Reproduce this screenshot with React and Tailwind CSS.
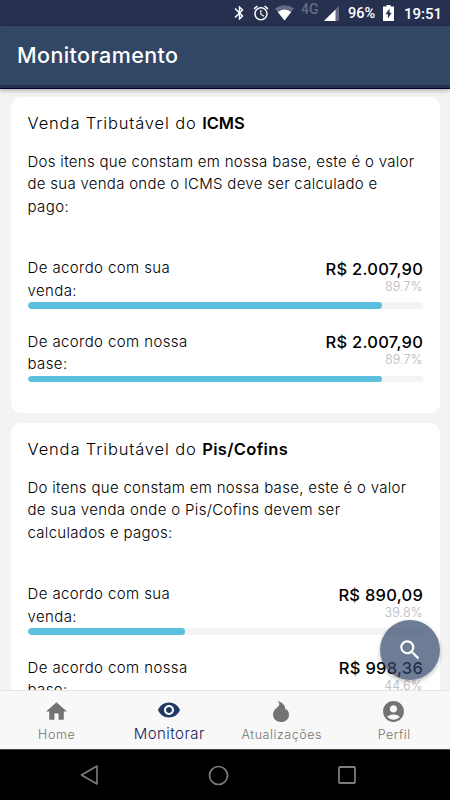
import React from 'react';
import { MdAccountCircle, MdAlarm, MdBluetooth, MdHome, MdRemoveRedEye, MdSearch } from 'react-icons/md';

const cards = [
  {
    tax: 'ICMS',
    taxClass: 'tracking-[0px]',
    lines: [
      { text: 'Dos itens que constam em nossa base, este é o valor', className: 'tracking-[0.3px]' },
      { text: 'de sua venda onde o ICMS deve ser calculado e', className: 'tracking-[0.28px]' },
      { text: 'pago:', className: 'tracking-[0.4px]' },
    ],
    rows: [
      { label: ['De acordo com sua', 'venda:'], value: 'R$ 2.007,90', percent: 89.7 },
      { label: ['De acordo com nossa', 'base:'], value: 'R$ 2.007,90', percent: 89.7 },
    ],
  },
  {
    tax: 'Pis/Cofins',
    taxClass: 'tracking-[0.35px]',
    lines: [
      { text: 'Do itens que constam em nossa base, este é o valor', className: 'tracking-[0.3px]' },
      { text: 'de sua venda onde o Pis/Cofins devem ser', className: 'tracking-[0.34px]' },
      { text: 'calculados e pagos:', className: 'tracking-[0.3px]' },
    ],
    rows: [
      { label: ['De acordo com sua', 'venda:'], value: 'R$ 890,09', percent: 39.8 },
      { label: ['De acordo com nossa', 'base:'], value: 'R$ 998,36', percent: 44.6 },
    ],
  },
];

// Flame icon for the "Atualizações" tab
const FlameIcon = () => (
  <svg width="16" height="21" viewBox="0 0 16 21" fill="currentColor">
    <path d="M4.500 0C8.500.9 11.600 3.300 12.200 7c.2.9.1 1.300.1 1.800.5-.1.900-.3 1.300-.6C15.200 9.700 16 11.500 16 13.700 16 18 12.600 21 8.200 21 3.600 21 0 17.900 0 13.500c0-3 1.600-5 3.600-6.600C5.200 5.600 6.400 4.700 6.300 3.100 6.200 1.800 5.400.8 4.500 0Z" />
  </svg>
);

const StatusBar = () => (
  <div className="flex h-[26px] shrink-0 items-center bg-[#27304f] pl-[231px] text-white">
    <MdBluetooth className="h-[18px] w-[17px] shrink-0" />
    <MdAlarm className="ml-[4px] h-[18px] w-[18px] shrink-0" />
    <svg className="ml-[5px] shrink-0" width="19" height="16" viewBox="0 0 19 16">
      <path d="M0 3.500Q9.500-3 19 3.500L9.500 15.500Z" fill="#646b82" />
      <path d="M2.800 7Q9.500 2 16.200 7L9.500 15.500Z" fill="#fff" />
    </svg>
    <span className="mb-[9px] ml-[7px] w-[18px] shrink-0 font-['Roboto'] text-[14px] font-medium leading-none text-[#646b82]">4G</span>
    <svg className="ml-[5px] mt-px shrink-0" width="15" height="15" viewBox="0 0 15 15">
      <path d="M15 0V15H0Z" fill="#646b82" />
      <path d="M11.500 3.500V15H0Z" fill="#fff" />
    </svg>
    <span className="ml-[9px] mt-[2px] w-[28px] shrink-0 whitespace-nowrap font-['Roboto'] text-[14.500px] font-medium leading-none">96%</span>
    <svg className="ml-[7px] shrink-0" width="11" height="16" viewBox="0 0 11 16">
      <path d="M3.500 0h4v1.500H11V16H0V1.500h3.500Z" fill="#fff" />
      <path d="M6.500 3.500 2.500 9.300h2.400V13.500L8.700 7.700H6.500Z" fill="#27304f" />
    </svg>
    <span className="ml-[10px] mt-[2px] shrink-0 font-['Roboto'] text-[15px] font-medium leading-none">19:51</span>
  </div>
);

const ProgressRow = ({ row }) => (
  <div className="mb-[22px]">
    <div className="flex h-[45px] justify-between">
      <div className="text-[15px] font-light leading-[22.400px] tracking-[0.4px]">
        {row.label.map((line) => (
          <div key={line}>{line}</div>
        ))}
      </div>
      <div className="pt-[1.500px] text-right">
        <div className="mr-[-0.6px] text-[16.500px] font-medium leading-[21px] tracking-[0.26px]">{row.value}</div>
        <div className="text-[12.500px] font-light leading-[13px] tracking-[0.1px] text-[#b4b4c0]">{row.percent}%</div>
      </div>
    </div>
    <div className="h-[6.500px] overflow-hidden rounded-full bg-[#f3f3f3]">
      <div className="h-full rounded-full bg-[#5bc0de]" style={{ width: `${row.percent}%` }} />
    </div>
  </div>
);

const TaxCard = ({ card }) => (
  <section className="h-[315.500px] shrink-0 rounded-[10px] bg-white px-[17px] pt-[15px] text-black">
    <h2 className="flex whitespace-pre text-[16.500px] font-light leading-[22px]">
      <span className="tracking-[0.86px]">Venda Tributável do </span>
      <span className={`font-semibold ${card.taxClass}`}>{card.tax}</span>
    </h2>
    <div className="mb-[39px] mt-[17px] whitespace-nowrap text-[15px] font-light leading-[22.400px]">
      {card.lines.map((line) => (
        <div key={line.text} className={line.className}>{line.text}</div>
      ))}
    </div>
    {card.rows.map((row) => (
      <ProgressRow key={row.label[0]} row={row} />
    ))}
  </section>
);

const TabBar = () => (
  <nav className="z-10 grid h-[59px] shrink-0 grid-cols-4 border-t border-[#e4e4e4] bg-[#f8f8f8] text-[#737373]">
    <div className="flex flex-col items-center pt-[8px]">
      <MdHome size={25} />
      <span className="ml-px mt-[3px] text-[12.500px] font-light leading-4 tracking-[0.7px]">Home</span>
    </div>
    <div className="flex flex-col items-center pt-[7px] text-[#1f3864]">
      <MdRemoveRedEye size={24} />
      <span className="ml-px mt-[3px] text-[15px] font-light leading-[18px] tracking-[0.45px] text-[#13235c]">Monitorar</span>
    </div>
    <div className="flex flex-col items-center pt-[10px]">
      <FlameIcon />
      <span className="ml-px mt-[5px] text-[12.500px] font-light leading-4 tracking-[0.55px]">Atualizações</span>
    </div>
    <div className="flex flex-col items-center pt-[8px]">
      <MdAccountCircle size={25} />
      <span className="ml-px mt-[3px] text-[12.500px] font-light leading-4 tracking-[0.5px]">Perfil</span>
    </div>
  </nav>
);

const SystemNav = () => (
  <div className="flex h-[51px] shrink-0 items-center border-t border-[#444] bg-black pl-[80px]">
    <svg width="19" height="20" viewBox="0 0 19 20" fill="none" stroke="#7d7d7d" strokeWidth="1.600" strokeLinejoin="round">
      <path d="M17 1V19L1.500 10Z" />
    </svg>
    <svg className="ml-[108.500px]" width="21" height="21" viewBox="0 0 21 21" fill="none" stroke="#7d7d7d" strokeWidth="1.700">
      <circle cx="10.500" cy="10.500" r="9" />
    </svg>
    <svg className="ml-[109.500px]" width="18" height="18" viewBox="0 0 18 18" fill="none" stroke="#7d7d7d" strokeWidth="1.800">
      <rect x="1" y="1" width="16" height="16" rx="1" />
    </svg>
  </div>
);

const App = () => {
  return (
    <div className="relative flex h-[800px] w-[450px] flex-col overflow-hidden bg-[#f3f3f3] font-['Inter','Liberation_Sans',sans-serif]">
      <StatusBar />
      <header className="z-10 flex h-[63px] shrink-0 items-center border-b border-[#000035] bg-[#324666] shadow-[inset_0_-3px_0_#27304f,0_1px_5px_rgba(0,0,0,0.35)]">
        <h1 className="mb-[3px] pl-[17px] text-[21.500px] font-medium leading-none tracking-[0.4px] text-white">Monitoramento</h1>
      </header>

      <main className="flex min-h-0 flex-1 flex-col gap-[10.500px] overflow-hidden px-[10.500px] pt-[8px]">
        {cards.map((card) => (
          <TaxCard key={card.tax} card={card} />
        ))}
      </main>

      {/* floating search button */}
      <button className="absolute left-[380px] top-[620px] flex h-[60px] w-[60px] items-center justify-center rounded-full bg-[#314469]/70 text-white shadow-[0_2px_4px_rgba(0,0,0,0.25)]">
        <MdSearch size={26} />
      </button>

      <TabBar />
      <SystemNav />
    </div>
  );
};

export default App;
